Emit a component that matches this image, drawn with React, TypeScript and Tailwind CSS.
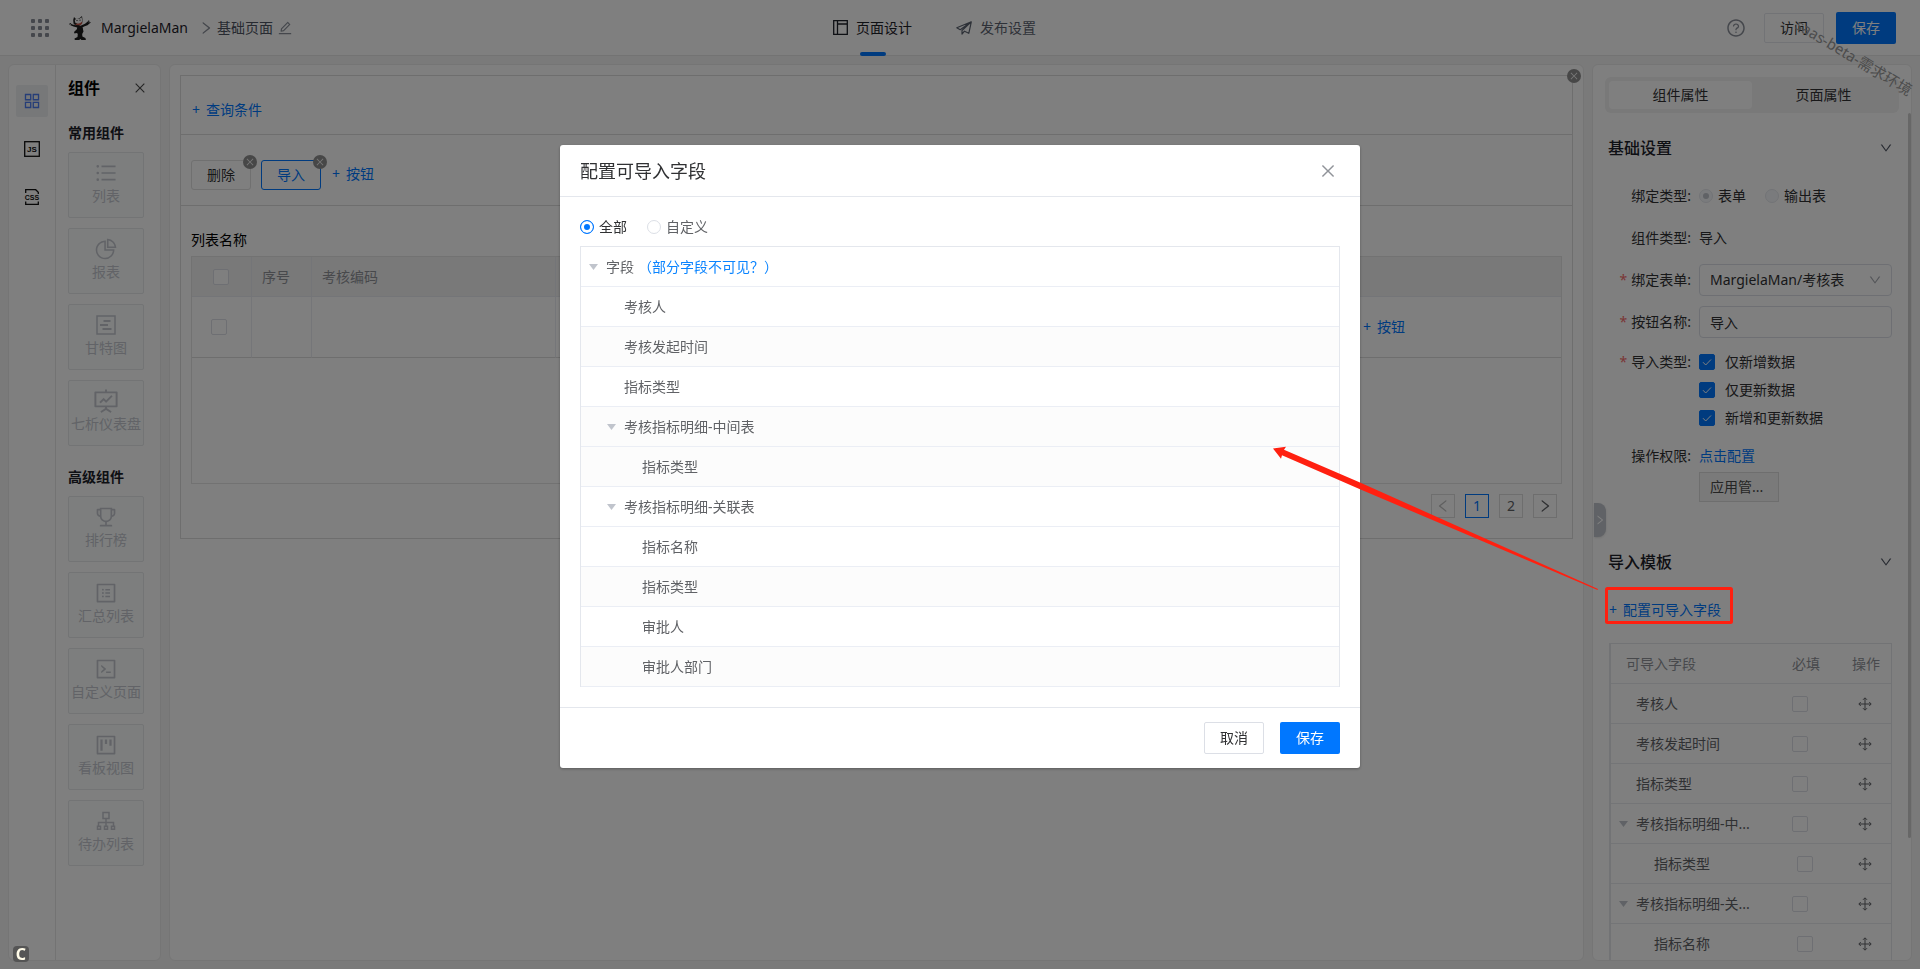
import React, { useState } from 'react';
import clsx from 'clsx';
import {
  AiOutlineAppstore,
  AiOutlineClose,
  AiOutlineCode,
  AiOutlineDown,
  AiOutlineEdit,
  AiOutlineFundProjectionScreen,
  AiOutlineLeft,
  AiOutlinePieChart,
  AiOutlineProfile,
  AiOutlineProject,
  AiOutlineQuestionCircle,
  AiOutlineRight,
  AiOutlineTrophy,
  AiOutlineUnorderedList,
} from 'react-icons/ai';

const GanttIcon = ({ className }: { className?: string }) => (
  <svg viewBox="0 0 24 24" className={className} fill="none" stroke="currentColor" strokeWidth="1.5">
    <rect x="3" y="3" width="18" height="18" />
    <path d="M9.500 8h7M6 12h8M8.500 16h9" strokeWidth="1.8" />
  </svg>
);

const OrgIcon = ({ className }: { className?: string }) => (
  <svg viewBox="0 0 24 24" className={className} fill="none" stroke="currentColor" strokeWidth="1.5">
    <path d="M9 3.500h6v6H9zM12 9.500V17M4.500 17v-3.500h15V17" />
    <path d="M3.500 17.200h3v3h-3zM10.500 17.200h3v3h-3zM17.500 17.200h3v3h-3z" />
  </svg>
);

const MoveIcon = () => (
  <svg viewBox="0 0 14 14" className="size-[14px]" fill="none" stroke="currentColor">
    <path d="M7 1v12M1 7h12M5 2.800L7 .8l2 2M5 11.200l2 2 2-2M2.800 5l-2 2 2 2M11.200 5l2 2-2 2" />
  </svg>
);

const basicWidgets = [
  { name: '列表', icon: AiOutlineUnorderedList },
  { name: '报表', icon: AiOutlinePieChart },
  { name: '甘特图', icon: GanttIcon },
  { name: '七析仪表盘', icon: AiOutlineFundProjectionScreen },
];

const advancedWidgets = [
  { name: '排行榜', icon: AiOutlineTrophy },
  { name: '汇总列表', icon: AiOutlineProfile },
  { name: '自定义页面', icon: AiOutlineCode },
  { name: '看板视图', icon: AiOutlineProject },
  { name: '待办列表', icon: OrgIcon },
];

const modalRows = [
  { name: '考核人', level: 1 },
  { name: '考核发起时间', level: 1, striped: true },
  { name: '指标类型', level: 1 },
  { name: '考核指标明细-中间表', level: 1, striped: true, open: true },
  { name: '指标类型', level: 2, striped: true },
  { name: '考核指标明细-关联表', level: 1, open: true },
  { name: '指标名称', level: 2 },
  { name: '指标类型', level: 2, striped: true },
  { name: '审批人', level: 2 },
  { name: '审批人部门', level: 2, striped: true },
];

const importRows = [
  { name: '考核人' },
  { name: '考核发起时间' },
  { name: '指标类型' },
  { name: '考核指标明细-中...', open: true },
  { name: '指标类型', child: true },
  { name: '考核指标明细-关...', open: true },
  { name: '指标名称', child: true },
];

function Caret() {
  return (
    <svg viewBox="0 0 9 6" className="h-[6px] w-[9px] shrink-0 text-[#c0c4cc]">
      <path d="M0 0h9L4.500 6z" fill="currentColor" />
    </svg>
  );
}

function AddButton({ label, className }: { label: string; className?: string }) {
  return (
    <button type="button" className={clsx('flex items-center gap-[6px] leading-5 text-[#0077ff]', className)}>
      <span>+</span>
      <span>{label}</span>
    </button>
  );
}

function CloseBadge({ label, className }: { label: string; className?: string }) {
  return (
    <button
      type="button"
      aria-label={label}
      className={clsx('absolute flex size-[14px] items-center justify-center rounded-full bg-[#8f8f8f] text-[#f0f0f0]', className)}
    >
      <AiOutlineClose className="size-[10px]" />
    </button>
  );
}

function EmptyCheckbox({ label }: { label: string }) {
  return <input type="checkbox" aria-label={label} className="block size-4 appearance-none rounded-[2px] border border-[#dcdfe6] bg-white" />;
}

function TypeOption({ label }: { label: string }) {
  const [checked, setChecked] = useState(true);

  return (
    <label className="flex h-7 items-center gap-[10px]">
      <span className="relative size-4">
        <input
          type="checkbox"
          checked={checked}
          onChange={(e) => setChecked(e.target.checked)}
          className="block size-4 appearance-none rounded-[2px] border border-[#dcdfe6] bg-white checked:border-[#0077ff] checked:bg-[#0077ff]"
        />
        {checked && (
          <svg viewBox="0 0 16 16" className="pointer-events-none absolute inset-0 size-4" fill="none" stroke="#fff">
            <path d="M4 8.200l2.700 2.800L12 5.500" />
          </svg>
        )}
      </span>
      {label}
    </label>
  );
}

function WidgetList({ title, items }: { title: string; items: typeof basicWidgets }) {
  return (
    <section>
      <h3 className="text-sm font-bold leading-5 text-[#1d2129]">{title}</h3>
      <ul className="mt-[9px] flex flex-col gap-[10px]">
        {items.map(({ name, icon: Icon }) => (
          <li key={name} className="flex h-[66px] w-[76px] flex-col items-center rounded-[2px] border border-[#e6e8eb] bg-[#fafdfc] pt-2 text-[#c4c7cf]">
            <span className="flex h-6 items-center">
              <Icon className={name === '七析仪表盘' ? 'size-7' : 'size-6'} />
            </span>
            <span className="mt-px whitespace-nowrap text-sm leading-5">{name}</span>
          </li>
        ))}
      </ul>
    </section>
  );
}

function Header() {
  return (
    <header className="flex h-14 shrink-0 items-center border-b border-[#e6e6e6] bg-white text-sm">
      <div className="flex flex-1 items-center pl-[31px]">
        <button type="button" aria-label="应用列表" className="text-[#8a8f99]">
          <svg viewBox="0 0 18 18" className="size-[18px]" fill="currentColor">
            {[0, 7, 14].map((y) => [0, 7, 14].map((x) => <rect key={`${x}-${y}`} x={x} y={y} width="4" height="4" rx="1" />))}
          </svg>
        </button>
        <svg viewBox="0 0 22 24" className="ml-5 h-6 w-[22px]">
          <path d="M5 1l2 2 3-.5L13 0l.6 4.500-.6 3-3 2.500H7L4.500 7.500 4.200 4z" fill="#222" />
          <path d="M5.800 4l2.200-1.800 2 .8 2.500-1.700 1 3.200-1.300 2.800-2.900.9-3.200-1.700z" fill="#f4f4f4" />
          <path d="M7.500 4.500h1M10.500 4.200h1" stroke="#222" />
          <path d="M6 8l5-.8 2-1.400.3 1.500-1.800 1.900H7.500z" fill="#c9584a" />
          <path d="M0 8l1.500-1 1.200 1.300L5.500 9l2 .5 4 .2 4.500-2 2.500-2L20 4l.5 2 1.500.6-1.500 1-2 1.700-3.500 1.200-1.500 1 .5 1.500H8l.2-1.600-3.700-.9-3-1.300z" fill="#1c1c1c" />
          <path d="M8.500 12.500h5.300l.7 3-1.300 2.500.2 2.500 3 1.500.5 2h-4.500l-1-1-1.200 1H5.800l-.3-1.500 3-1.500.3-3.200-1.300-.8-2 .5-.5-1.500z" fill="#1c1c1c" />
          <path d="M1 8.200l1 .8M19.500 6l1 .2" stroke="#ddd" strokeWidth=".8" />
        </svg>
        <span className="ml-[10px] text-[#1d2129]">MargielaMan</span>
        <AiOutlineRight className="ml-[10px] size-4 text-[#8a8f99]" />
        <span className="ml-[3px] text-[#4e5562]">基础页面</span>
        <button type="button" aria-label="编辑名称" className="ml-1 text-[#8a8f99]">
          <AiOutlineEdit className="size-4" />
        </button>
      </div>
      <nav className="mr-[58px] flex h-full gap-11">
        <a href="#design" className="relative flex items-center gap-2 text-[#1d2129]">
          <svg viewBox="0 0 15 15" className="size-[15px]" fill="none" stroke="currentColor">
            <path d="M.7.700h13.600v13.600H.7zM4.500.700v13.600M4.500 4h10" strokeWidth="1.300" />
          </svg>
          页面设计
          <span className="absolute bottom-[-1px] left-1/2 h-1 w-[26px] -translate-x-1/2 rounded-full bg-[#0077ff]" />
        </a>
        <a href="#publish" className="flex items-center gap-2 text-[#5c6370]">
          <svg viewBox="0 0 16 14" className="h-[14px] w-4" fill="none" stroke="currentColor" strokeWidth="1.200" strokeLinejoin="round">
            <path d="M15.300.800L.800 6.800l3.400 1.900L15.300.800l-2.500 11.500-4.300-2.100L6 13V9.500L15.300.800" />
          </svg>
          发布设置
        </a>
      </nav>
      <div className="flex flex-1 items-center justify-end pr-6">
        <button type="button" aria-label="帮助" className="mr-[18px] text-[#8a8f99]">
          <AiOutlineQuestionCircle className="size-5" />
        </button>
        <button type="button" className="h-[30px] w-[60px] rounded-[2px] border border-[#e4e7ed] text-[#303133]">访问</button>
        <button type="button" className="ml-3 h-8 w-[60px] rounded-[2px] bg-[#0077ff] text-white">保存</button>
      </div>
    </header>
  );
}

function WidgetPanel() {
  return (
    <aside className="flex w-[153px] shrink-0 rounded-md border border-[#ebebeb] bg-white">
      <div className="flex w-[47px] shrink-0 flex-col items-center gap-4 border-r border-[#e6e6e6] pt-5">
        <button type="button" aria-label="组件" className="flex size-8 items-center justify-center rounded-[2px] bg-[#eff0f2] text-[#4d7df0]">
          <AiOutlineAppstore className="size-5" />
        </button>
        <button type="button" aria-label="脚本" className="flex size-8 items-center justify-center text-[#111]">
          <svg viewBox="0 0 16 16" className="size-4">
            <rect x=".7" y=".7" width="14.600" height="14.600" fill="none" stroke="currentColor" strokeWidth="1.300" />
            <text x="8" y="10.500" textAnchor="middle" fontSize="8" fontWeight="700" fontFamily="Liberation Sans" fill="currentColor">JS</text>
          </svg>
        </button>
        <button type="button" aria-label="样式" className="flex size-8 items-center justify-center text-[#111]">
          <svg viewBox="0 0 16 16" className="size-4">
            <path d="M1.700 4V.700h10l2.600 2.600V5M1.700 12.500v2.800h12.600v-2.800" fill="none" stroke="currentColor" strokeWidth="1.300" />
            <text x="8" y="11" textAnchor="middle" fontSize="7" fontWeight="700" fontFamily="Liberation Sans" fill="currentColor">CSS</text>
          </svg>
        </button>
      </div>
      <div className="pl-3 pt-[11px]">
        <div className="flex w-[79px] items-center justify-between">
          <h2 className="text-base font-bold leading-6 text-black">组件</h2>
          <button type="button" aria-label="收起组件面板" className="text-[#4a4a4a]">
            <AiOutlineClose className="size-[14px]" />
          </button>
        </div>
        <div className="mt-[23px] flex flex-col gap-[21px]">
          <WidgetList title="常用组件" items={basicWidgets} />
          <WidgetList title="高级组件" items={advancedWidgets} />
        </div>
      </div>
    </aside>
  );
}

function Canvas() {
  return (
    <main className="min-w-0 flex-1 rounded-md border border-[#ebebeb] bg-white p-[10px] text-sm">
      <div className="relative border border-[#dcdcdc]">
        <CloseBadge label="删除列表" className="-right-[9px] -top-[7px]" />
        <div className="flex h-[59px] items-center border-b border-[#dcdcdc] pl-[11px] pt-[10px]">
          <AddButton label="查询条件" />
        </div>
        <div className="flex h-[71px] items-center border-b border-[#dcdcdc] px-[10px] pt-[9px]">
          <div className="relative">
            <button type="button" className="block h-[30px] w-[60px] rounded-[3px] border border-[#e0e0e0] text-[#303133]">删除</button>
            <CloseBadge label="移除删除按钮" className="-right-[6px] -top-[5px]" />
          </div>
          <div className="relative ml-[10px]">
            <button type="button" className="block h-[30px] w-[60px] rounded-[3px] border border-[#0077ff] text-[#0077ff]">导入</button>
            <CloseBadge label="移除导入按钮" className="-right-[6px] -top-[5px]" />
          </div>
          <AddButton label="按钮" className="mb-[2px] ml-[11px]" />
        </div>
        <div className="px-[10px] pb-5 pt-6">
          <h3 className="leading-5 text-black">列表名称</h3>
          <div className="mt-[6px] h-[228px] border border-[#e4e4e4]">
            <table className="w-full table-fixed border-separate border-spacing-0 text-left">
              <colgroup>
                <col className="w-[60px]" />
                <col className="w-[60px]" />
                <col className="w-[244px]" />
                <col />
                <col className="w-[208px]" />
              </colgroup>
              <thead>
                <tr className="h-10 bg-[#f2f2f2] text-[#909399] *:border-b *:border-[#e8eaf0]">
                  <th className="border-r pl-[21px]">
                    <EmptyCheckbox label="全选" />
                  </th>
                  <th className="border-r pl-[10px] font-normal">序号</th>
                  <th className="border-r pl-[10px] font-normal">考核编码</th>
                  <th className="border-r" />
                  <th />
                </tr>
              </thead>
              <tbody>
                <tr className="h-[61px] *:border-b *:border-b-[#dcdcdc] *:border-r-[#ebedf2]">
                  <td className="border-r pl-[19px]">
                    <EmptyCheckbox label="选择第一行" />
                  </td>
                  <td className="border-r" />
                  <td className="border-r" />
                  <td className="border-r" />
                  <td className="pl-[10px]">
                    <AddButton label="按钮" />
                  </td>
                </tr>
              </tbody>
            </table>
          </div>
          <div className="mt-[10px] flex justify-end gap-[10px] pr-[5px] text-base text-[#606266]">
            <button type="button" aria-label="上一页" className="flex size-6 items-center justify-center border border-[#dcdcdc] text-[#c0c0c0]">
              <AiOutlineLeft className="size-4" />
            </button>
            <button type="button" className="flex size-6 items-center justify-center border border-[#0077ff] text-sm text-[#0077ff]">1</button>
            <button type="button" className="flex size-6 items-center justify-center border border-[#dcdcdc] text-sm">2</button>
            <button type="button" aria-label="下一页" className="flex size-6 items-center justify-center border border-[#dcdcdc]">
              <AiOutlineRight className="size-4" />
            </button>
          </div>
        </div>
      </div>
    </main>
  );
}

function FieldLabel({ htmlFor, required, children }: { htmlFor?: string; required?: boolean; children: React.ReactNode }) {
  return (
    <label htmlFor={htmlFor} className="w-[86px] shrink-0 text-right text-[#303133]">
      {required && <span className="mr-1 text-[#f56c6c]">*</span>}
      {children}:
    </label>
  );
}

function SectionTitle({ children }: { children: React.ReactNode }) {
  return (
    <div className="flex items-center justify-between pl-[3px] pr-[6px]">
      <h2 className="text-base font-medium leading-6 text-[#1d2129]">{children}</h2>
      <AiOutlineDown className="size-[14px] text-[#4e5562]" />
    </div>
  );
}

function PropertyPanel() {
  const [name, setName] = useState('导入');
  const disabledRadio = 'block size-[14px] appearance-none rounded-full border border-[#e4e7ed] bg-[#f5f7fa]';

  return (
    <aside className="relative flex w-80 shrink-0 flex-col overflow-hidden rounded-md border border-[#ebebeb] bg-white px-3 pt-3 text-sm">
      <div className="flex h-9 shrink-0 rounded-md bg-[#f2f2f2] p-1 text-[#303133]">
        <button type="button" className="flex-1 rounded-sm bg-white">组件属性</button>
        <button type="button" className="flex-1">页面属性</button>
      </div>
      <div className="absolute right-0 top-12 h-[725px] w-[3px] rounded-full bg-[#cfcfcf]" />
      <button type="button" aria-label="收起属性面板" className="absolute left-px top-[438px] flex h-[34px] w-3 items-center justify-center rounded-r-lg bg-[#c0c4cc] text-white shadow">
        <AiOutlineRight className="size-[14px]" />
      </button>

      <div className="min-h-0 flex-1 overflow-hidden pt-[23px]">
        <SectionTitle>基础设置</SectionTitle>
        <div className="mt-5 flex flex-col gap-[10px] pr-[7px] text-[#303133]">
          <div className="flex h-8 items-center gap-2">
            <FieldLabel>绑定类型</FieldLabel>
            <label className="flex items-center gap-[5px]">
              <span className="relative flex">
                <input type="radio" name="bindType" defaultChecked disabled className={disabledRadio} />
                <span className="absolute left-1 top-1 size-[6px] rounded-full bg-[#c0c4cc]" />
              </span>
              表单
            </label>
            <label className="ml-[11px] flex items-center gap-[5px]">
              <input type="radio" name="bindType" disabled className={disabledRadio} />
              输出表
            </label>
          </div>
          <div className="flex h-8 items-center gap-2">
            <FieldLabel>组件类型</FieldLabel>
            <span>导入</span>
          </div>
          <div className="flex h-8 items-center gap-2">
            <FieldLabel htmlFor="form" required>绑定表单</FieldLabel>
            <div className="relative flex-1">
              <select id="form" className="block h-8 w-full appearance-none rounded border border-[#dcdfe6] bg-white px-[10px]">
                <option>MargielaMan/考核表</option>
              </select>
              <AiOutlineDown className="pointer-events-none absolute right-[10px] top-[9px] size-[14px] text-[#a8abb2]" />
            </div>
          </div>
          <div className="flex h-8 items-center gap-2">
            <FieldLabel htmlFor="buttonName" required>按钮名称</FieldLabel>
            <input
              id="buttonName"
              type="text"
              value={name}
              onChange={(e) => setName(e.target.value)}
              className="h-8 min-w-0 flex-1 rounded border border-[#dcdfe6] bg-white px-[10px]"
            />
          </div>
          <div className="flex gap-2 leading-7">
            <FieldLabel required>导入类型</FieldLabel>
            <div>
              <TypeOption label="仅新增数据" />
              <TypeOption label="仅更新数据" />
              <TypeOption label="新增和更新数据" />
            </div>
          </div>
          <div className="flex gap-2 leading-7">
            <FieldLabel>操作权限</FieldLabel>
            <div>
              <a href="#permission" className="block text-[#0077ff]">点击配置</a>
              <button type="button" className="mt-[2px] block h-[30px] w-20 border border-[#dcdcdc] bg-[#f5f5f5] pl-[10px] text-left leading-7 text-[#4a4a4a]">应用管...</button>
            </div>
          </div>
        </div>

        <div className="mt-12">
          <SectionTitle>导入模板</SectionTitle>
        </div>
        <AddButton label="配置可导入字段" className="mt-[26px] pl-1" />
        <div className="ml-1 mr-[7px] mt-[23px] border border-l-2 border-[#e4e6ea]">
          <table className="w-full table-fixed border-separate border-spacing-0 text-left text-[#606266]">
            <colgroup>
              <col />
              <col className="w-[60px]" />
              <col className="w-[49px]" />
            </colgroup>
            <thead>
              <tr className="h-10 text-[#909399] *:border-b *:border-[#e8eaee]">
                <th className="pl-[15px] font-normal">可导入字段</th>
                <th className="pl-[10px] font-normal">必填</th>
                <th className="pl-[10px] font-normal">操作</th>
              </tr>
            </thead>
            <tbody>
              {importRows.map((row, i) => (
                <tr key={i} className="h-10 *:border-b *:border-[#e8eaee]">
                  <td>
                    <div className={clsx('flex items-center whitespace-nowrap', row.child ? 'pl-[43px]' : row.open ? 'gap-2 pl-2' : 'pl-[25px]')}>
                      {row.open && <Caret />}
                      {row.name}
                    </div>
                  </td>
                  <td className={row.child ? 'pl-[15px]' : 'pl-[10px]'}>
                    <EmptyCheckbox label={`${row.name}必填`} />
                  </td>
                  <td className="pl-4">
                    <MoveIcon />
                  </td>
                </tr>
              ))}
            </tbody>
          </table>
        </div>
      </div>
    </aside>
  );
}

function FieldDialog() {
  const [mode, setMode] = useState('all');
  const radio =
    'block size-[14px] appearance-none rounded-full border border-[#dcdfe6] bg-white checked:border-[#0077ff] checked:shadow-[inset_0_0_0_3px_white] checked:bg-[#0077ff]';

  return (
    <div className="fixed inset-0 flex items-start justify-center bg-black/50">
      <div role="dialog" aria-label="配置可导入字段" className="mt-[15vh] w-[800px] rounded-[3px] bg-white text-sm text-[#606266] shadow-[0_1px_3px_rgba(0,0,0,0.3)]">
        <div className="flex h-[52px] items-center justify-between border-b border-[#e4e7ed] pl-5 pr-[23px]">
          <h2 className="text-lg text-[#303133]">配置可导入字段</h2>
          <button type="button" aria-label="关闭" className="text-[#909399]">
            <AiOutlineClose className="size-[18px]" />
          </button>
        </div>
        <div className="px-5 pb-5 pt-5">
          <div className="flex h-5 items-center">
            <label className={clsx('flex items-center gap-[5px]', mode === 'all' && 'text-[#303133]')}>
              <input type="radio" name="mode" checked={mode === 'all'} onChange={() => setMode('all')} className={radio} />
              全部
            </label>
            <label className={clsx('ml-5 flex items-center gap-[5px]', mode === 'custom' && 'text-[#303133]')}>
              <input type="radio" name="mode" checked={mode === 'custom'} onChange={() => setMode('custom')} className={radio} />
              自定义
            </label>
          </div>
          <div className="mt-[9px] border border-b-0 border-[#e4e7ed]">
            <table className="w-full border-separate border-spacing-0 text-left">
              <thead>
                <tr className="h-10 *:border-b *:border-[#ebeef5]">
                  <th className="font-normal">
                    <div className="flex items-center pl-2">
                      <Caret />
                      <span className="ml-2">字段</span>
                      <a href="#hidden" className="ml-1 text-[#0a84ff]">（部分字段不可见？）</a>
                    </div>
                  </th>
                </tr>
              </thead>
              <tbody>
                {modalRows.map((row, i) => (
                  <tr key={i} className={clsx('h-10 *:border-b *:border-[#ebeef5]', row.striped && 'bg-[#fcfcfc]')}>
                    <td>
                      <div className={clsx('flex items-center', row.level === 2 ? 'pl-[61px]' : row.open ? 'gap-2 pl-[26px]' : 'pl-[43px]')}>
                        {row.open && <Caret />}
                        {row.name}
                      </div>
                    </td>
                  </tr>
                ))}
              </tbody>
            </table>
          </div>
        </div>
        <div className="flex justify-end gap-4 border-t border-[#e4e7ed] px-5 py-[14px]">
          <button type="button" className="h-8 w-[60px] rounded-[2px] border border-[#dcdfe6] text-[#303133]">取消</button>
          <button type="button" className="h-8 w-[60px] rounded-[2px] bg-[#0077ff] text-white">保存</button>
        </div>
      </div>
    </div>
  );
}

export default function App() {
  return (
    <div className="relative flex h-screen flex-col overflow-hidden bg-[#f4f4f4] font-['Noto_Sans','Noto_Sans_CJK_SC',sans-serif]">
      <Header />
      <div className="flex min-h-0 flex-1 gap-2 p-2">
        <WidgetPanel />
        <Canvas />
        <PropertyPanel />
      </div>
      <div className="pointer-events-none absolute right-0 top-[45px] rotate-[31deg] text-[15px] leading-6 text-[#999999]">saas-beta-需求环境</div>

      <FieldDialog />

      <div className="pointer-events-none fixed bottom-[7px] left-[13px] flex size-4 items-center justify-center rounded bg-[#555555] text-base font-bold text-[#fffbe8]">C</div>
      <svg className="pointer-events-none fixed inset-0 h-full w-full">
        <path d="M1273 448.500L1286 446.800 1284 449.700 1360 482.500 1598 589 1597.500 590 1360 489.300 1282 455.200 1281 458.700z" fill="#ff2010" />
        <rect x="1606.500" y="588.500" width="125" height="34" rx="1" fill="none" stroke="#ff2010" strokeWidth="3" />
      </svg>
    </div>
  );
}
